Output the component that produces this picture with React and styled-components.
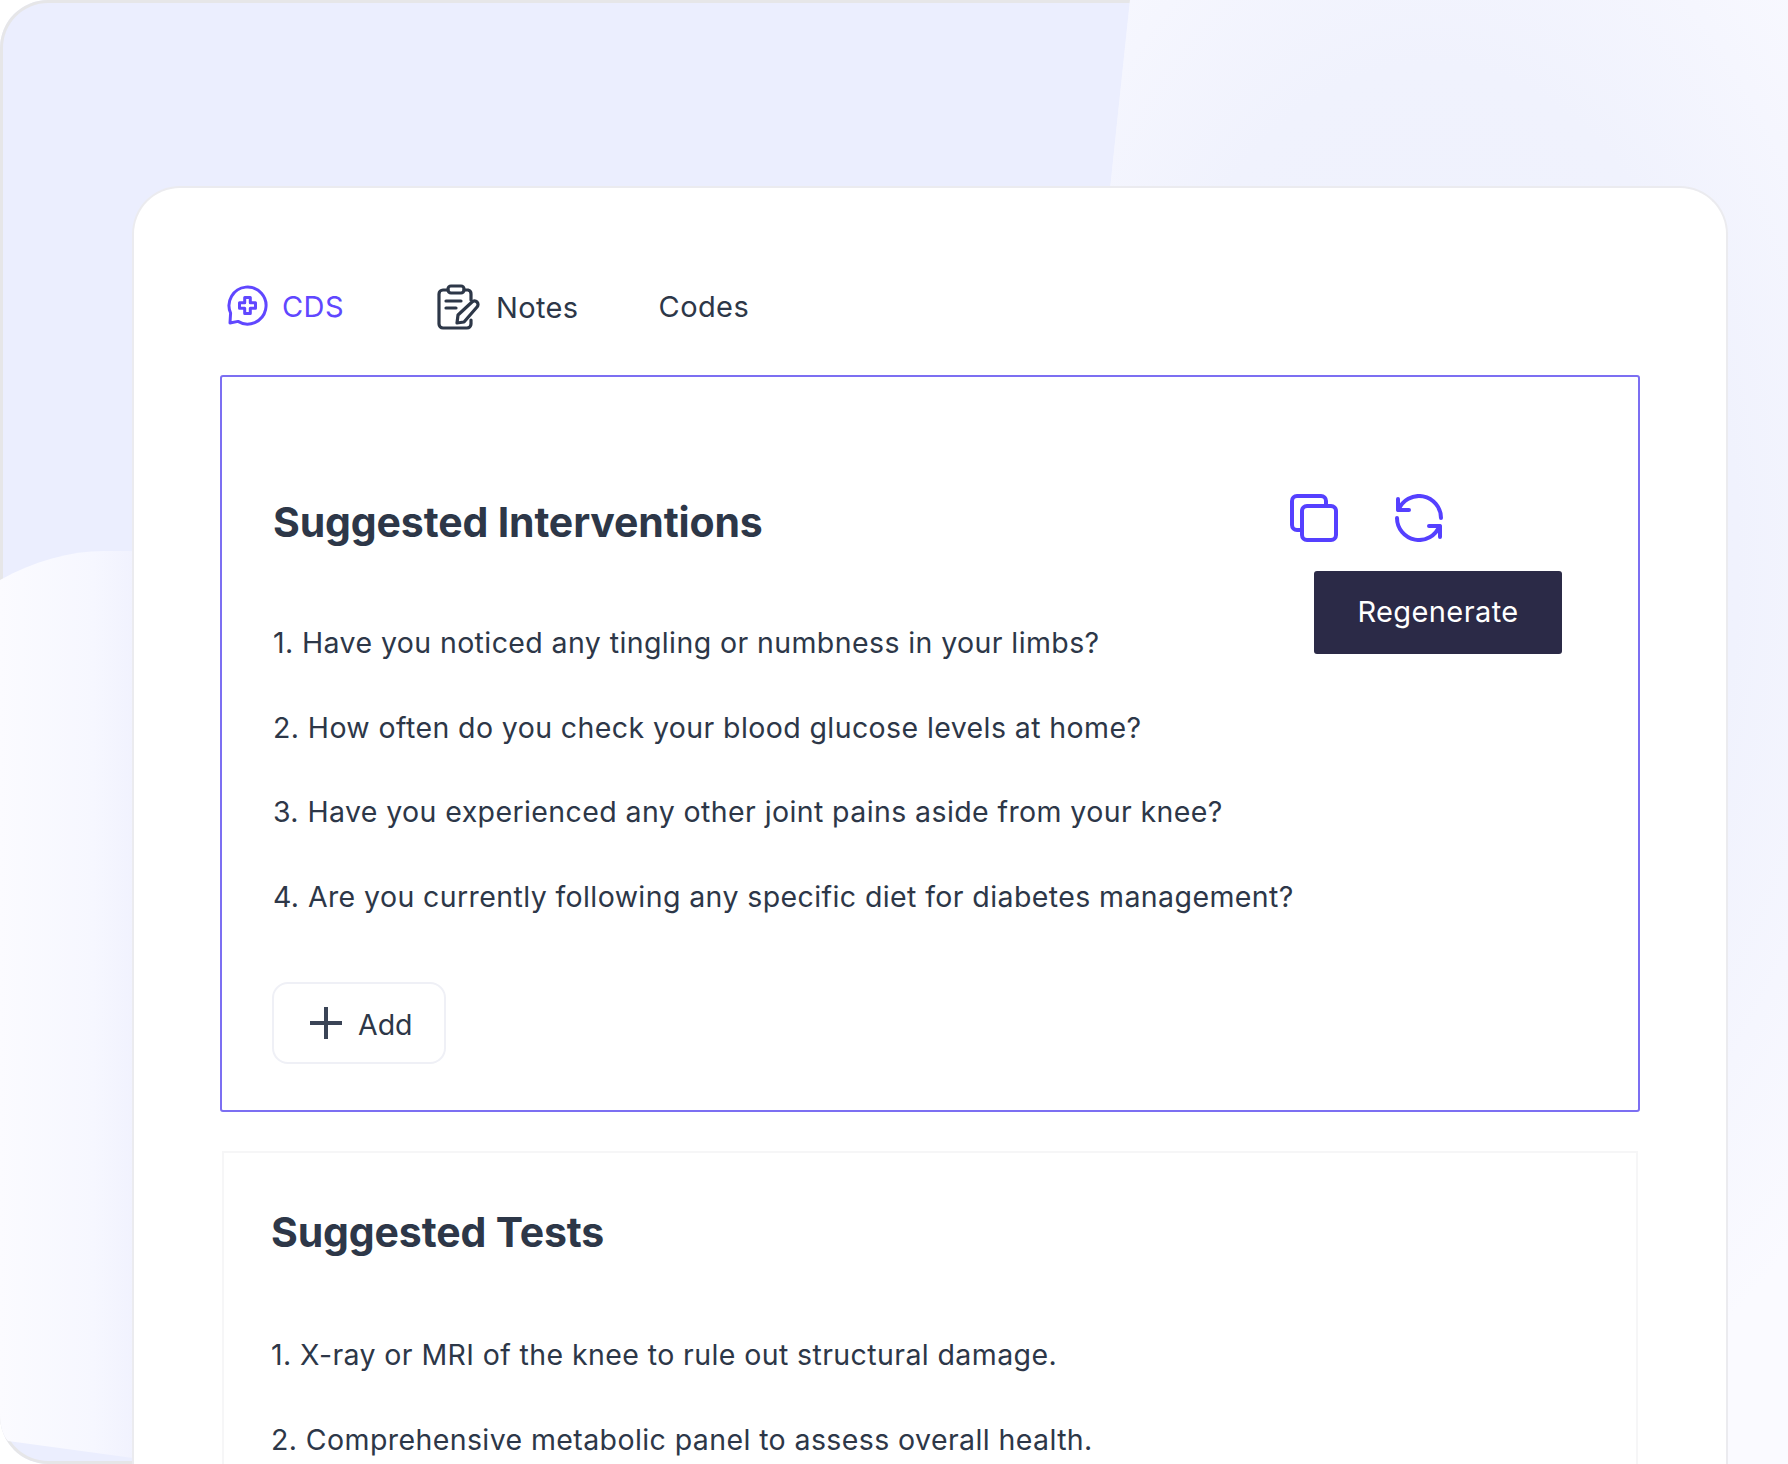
import React from 'react';
import styled, { createGlobalStyle } from 'styled-components';

const GlobalStyle = createGlobalStyle`
  html, body {
    margin: 0;
    padding: 0;
    background: #fff;
    font-family: 'Inter', 'Liberation Sans', sans-serif;
  }
`;

const Frame = styled.div`
  position: relative;
  width: 1788px;
  height: 1464px;
  overflow: hidden;
  box-sizing: border-box;
  padding: 186px 60px 0 132px;
  border-radius: 48px 0 0 48px;
  background: #ebeefe;
  box-shadow: inset 0 0 0 3px #e6e6e8;
`;

const RightShape = styled.div`
  position: absolute;
  left: 1090px;
  top: 0;
  right: 0;
  bottom: 0;
  clip-path: polygon(40px 0, 100% 0, 100% 100%, 0 100%, 0 380px);
  background:
    radial-gradient(ellipse 560px 900px at 340px 560px, #eef1fd 0%, #f0f2fd 55%, rgba(240, 242, 253, 0) 100%),
    #fafaff;
`;

const LeftShape = styled.div`
  position: absolute;
  left: 0;
  top: 551px;
  width: 133px;
  height: 913px;
  clip-path: path('M0 29 C 34 10 70 0 104 0 L133 0 L133 907 L8 890 L0 880 Z');
  background: linear-gradient(90deg, #fbfbff 0%, #f6f7ff 70%, #f1f2fe 100%);
`;

const Card = styled.main`
  position: relative;
  box-sizing: border-box;
  height: 1320px;
  padding: 94px 86px 0 86px;
  background: #fff;
  border: 2px solid #ebebef;
  border-bottom: 0;
  border-radius: 48px 48px 0 0;
  color: #2d3748;
`;

const Tabs = styled.nav`
  display: flex;
  align-items: center;
  height: 48px;
  margin-left: 6px;
  margin-bottom: 45px;
`;

const Tab = styled.div`
  display: flex;
  align-items: center;
  gap: ${(p) => p.$gap || 0}px;
  margin-right: ${(p) => p.$after || 0}px;
  padding-top: ${(p) => p.$drop || 0}px;
  font-size: 29px;
  letter-spacing: 0.4px;
  color: ${(p) => (p.$active ? '#6047ff' : '#2d3748')};
`;

const Panel = styled.section`
  box-sizing: border-box;
  display: grid;
  grid-template-columns: minmax(0, 1fr) auto;
  height: 737px;
  padding: 108px 76px 0 51px;
  border: 2px solid #7c6ff2;
  border-radius: 3px;
`;

const Title = styled.h2`
  margin: 0;
  height: 74px;
  font-size: 41px;
  line-height: 74px;
  font-weight: 700;
  letter-spacing: -0.15px;
  color: #2d3748;
`;

const List = styled.ol`
  margin: ${(p) => p.$top || 0}px 0 0;
  padding: 0;
  list-style: none;
`;

const Item = styled.li`
  font-size: 28.5px;
  line-height: 84.7px;
  letter-spacing: 0.4px;
  white-space: nowrap;
  color: #2d3748;
`;

const Actions = styled.div`
  display: flex;
  flex-direction: column;
  align-items: flex-end;
  margin-top: 9px;
`;

const Tools = styled.div`
  display: flex;
  gap: 57px;
  margin-right: 119px;
  margin-bottom: 29px;
`;

const Regenerate = styled.button`
  width: 248px;
  height: 83px;
  padding: 0 0 2px;
  border: 0;
  border-radius: 3px;
  background: #2b2a47;
  color: #fff;
  font: 400 29px 'Inter', sans-serif;
  letter-spacing: 0.4px;
`;

const AddButton = styled.button`
  display: flex;
  align-items: center;
  gap: 15px;
  box-sizing: border-box;
  width: 174px;
  height: 82px;
  margin: 42px 0 0 -1px;
  padding: 0 0 0 35px;
  background: #fff;
  border: 2px solid #eff0f6;
  border-radius: 16px;
  color: #2d3748;
  font: 400 28.5px 'Inter', sans-serif;
`;

const AddLabel = styled.span`
  padding-top: 3px;
`;

const SecondPanel = styled.section`
  box-sizing: border-box;
  height: 400px;
  margin: 39px 2px 0 2px;
  padding: 42px 48px 0 47px;
  border: 2px solid #f6f6f7;
  border-bottom: 0;
`;

const BlueIcon = styled.svg`
  display: block;
  fill: none;
  stroke: #5540ff;
  stroke-width: 4;
  stroke-linecap: round;
  stroke-linejoin: round;
`;

const TabIcon = styled.svg`
  display: block;
  fill: none;
  stroke: ${(p) => p.$color};
  stroke-width: ${(p) => p.$stroke || 3};
  stroke-linecap: ${(p) => p.$cap || 'round'};
  stroke-linejoin: round;
`;

const CdsIcon = () => (
  <TabIcon $color="#6047ff" $stroke={3} width="43" height="42" viewBox="0 0 43 42">
    <path d="M12 36.4 A18.5 18.5 0 1 0 4.6 28 L4 38 Z" />
    <path d="M18.7 12.5 h5.6 v5.2 h5.2 v5.6 h-5.2 v5.2 h-5.6 v-5.2 h-5.2 v-5.6 h5.2 Z" />
  </TabIcon>
);

const NotesIcon = () => (
  <TabIcon $color="#2d3748" $stroke={3.2} width="43" height="46" viewBox="0 0 43 46">
    <path d="M11 6 H6 a4 4 0 0 0 -4 4 V40 a4 4 0 0 0 4 4 H30 a4 4 0 0 0 4 -4 V36" />
    <path d="M27 6 h4 a4 4 0 0 1 3 4 V16" />
    <rect x="11" y="2" width="16" height="7" rx="3" />
    <path d="M9 17 H24 M9 24 H19" />
    <path d="M20 39 L21 31 L35 18 a3.5 3.5 0 0 1 5 5 L27 38 Z" />
  </TabIcon>
);

const CopyIcon = () => (
  <BlueIcon width="48" height="48" viewBox="0 0 48 48">
    <rect x="12" y="12" width="34" height="34" rx="5" />
    <path d="M12 36 H7 a5 5 0 0 1 -5 -5 V7 a5 5 0 0 1 5 -5 H31 a5 5 0 0 1 5 5 V12" />
  </BlueIcon>
);

const RefreshIcon = () => (
  <BlueIcon width="48" height="48" viewBox="0 0 48 48">
    <path d="M3.5 16 A22 22 0 0 1 46 24" />
    <path d="M2 24 A22 22 0 0 0 44.5 32" />
    <path d="M3 5 V16 H14" />
    <path d="M34 32 H45 V43" />
  </BlueIcon>
);

const PlusIcon = () => (
  <TabIcon $color="#3a4456" $stroke={4} $cap="butt" width="34" height="34" viewBox="0 0 34 34">
    <path d="M17 1 V33 M1 17 H33" />
  </TabIcon>
);

const interventions = [
  '1. Have you noticed any tingling or numbness in your limbs?',
  '2. How often do you check your blood glucose levels at home?',
  '3. Have you experienced any other joint pains aside from your knee?',
  '4. Are you currently following any specific diet for diabetes management?',
];

const tests = [
  '1. X-ray or MRI of the knee to rule out structural damage.',
  '2. Comprehensive metabolic panel to assess overall health.',
];

const App = () => (
  <>
    <GlobalStyle />
    <Frame>
      <RightShape />
      <LeftShape />
      <Card>
        <Tabs>
          <Tab $active $gap={13} $after={93}>
            <CdsIcon />
            CDS
          </Tab>
          <Tab $gap={16} $after={80} $drop={2}>
            <NotesIcon />
            Notes
          </Tab>
          <Tab>Codes</Tab>
        </Tabs>
        <Panel>
          <div>
            <Title>Suggested Interventions</Title>
            <List $top={42}>
              {interventions.map((text) => (
                <Item key={text}>{text}</Item>
              ))}
            </List>
            <AddButton>
              <PlusIcon />
              <AddLabel>Add</AddLabel>
            </AddButton>
          </div>
          <Actions>
            <Tools>
              <CopyIcon />
              <RefreshIcon />
            </Tools>
            <Regenerate>Regenerate</Regenerate>
          </Actions>
        </Panel>
        <SecondPanel>
          <Title>Suggested Tests</Title>
          <List $top={44}>
            {tests.map((text) => (
              <Item key={text}>{text}</Item>
            ))}
          </List>
        </SecondPanel>
      </Card>
    </Frame>
  </>
);

export default App;
